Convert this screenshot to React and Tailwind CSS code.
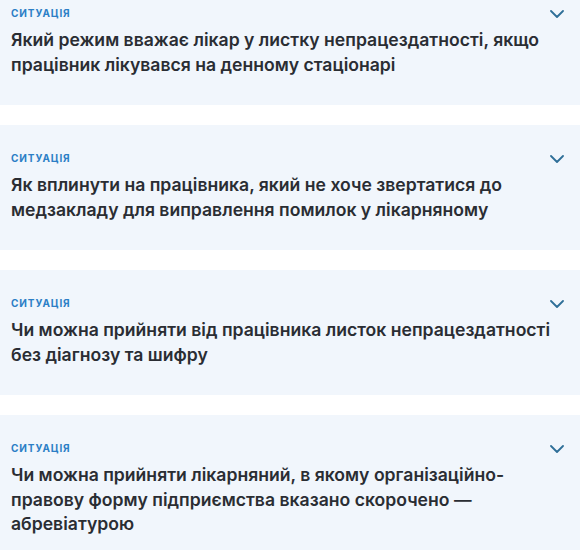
import React from "react";

const items = [
  "Який режим вважає лікар у листку непрацездатності, якщо працівник лікувався на денному стаціонарі",
  "Як вплинути на працівника, який не хоче звертатися до медзакладу для виправлення помилок у лікарняному",
  "Чи можна прийняти від працівника листок непрацездатності без діагнозу та шифру",
  "Чи можна прийняти лікарняний, в якому організаційно-правову форму підприємства вказано скорочено — абревіатурою",
];

function Chevron() {
  return (
    <svg width="14" height="8" viewBox="0 0 14 8" fill="none" className="shrink-0">
      <path d="M1 1L7 7L13 1" stroke="#2f6f98" strokeWidth="1.8" strokeLinecap="round" strokeLinejoin="round" />
    </svg>
  );
}

export default function App() {
  return (
    <div className="w-[580px] h-[550px] overflow-hidden bg-white" style={{ fontFamily: "Inter, 'Noto Sans', sans-serif" }}>
      <div className="-mt-[20px] flex flex-col gap-5">
        {items.map((t, i) => (
          <div key={i} className="bg-[#f1f6fc] pl-[11px] pr-4 pt-[26px] pb-[28px]">
            <div className="flex items-start justify-between">
              <div className="text-[10px] leading-[14px] font-bold tracking-[0.9px] text-[#2c7fc6]">СИТУАЦІЯ</div>
              <div className="mt-[4px]"><Chevron /></div>
            </div>
            <div className="mt-[8px] -mr-2 text-[17.6px] leading-[24.5px] font-semibold text-[#2a2d33]">{t}</div>
          </div>
        ))}
      </div>
    </div>
  );
}
